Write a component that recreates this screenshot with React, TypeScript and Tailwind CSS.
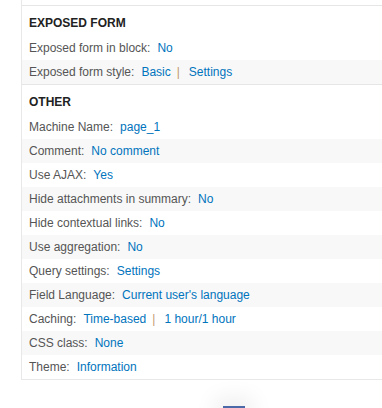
import React from "react";

type Row = { label: string; links: string[] };

const exposed: Row[] = [
  { label: "Exposed form in block:", links: ["No"] },
  { label: "Exposed form style:", links: ["Basic", "Settings"] },
];

const other: Row[] = [
  { label: "Machine Name:", links: ["page_1"] },
  { label: "Comment:", links: ["No comment"] },
  { label: "Use AJAX:", links: ["Yes"] },
  { label: "Hide attachments in summary:", links: ["No"] },
  { label: "Hide contextual links:", links: ["No"] },
  { label: "Use aggregation:", links: ["No"] },
  { label: "Query settings:", links: ["Settings"] },
  { label: "Field Language:", links: ["Current user's language"] },
  { label: "Caching:", links: ["Time-based", "1 hour/1 hour"] },
  { label: "CSS class:", links: ["None"] },
  { label: "Theme:", links: ["Information"] },
];

function RowView({ row, odd }: { row: Row; odd: boolean }) {
  return (
    <div
      className={
        "h-[24px] pl-[7px] pt-[4px] leading-4 whitespace-nowrap text-[#555555] " +
        (odd ? "bg-[#f8f8f8]" : "bg-white")
      }
    >
      <span>{row.label}</span>
      <span className="ml-[7px] text-[#0074bd]">{row.links[0]}</span>
      {row.links.length > 1 && (
        <>
          <span className="ml-[6px] text-[#c49a70]">|</span>
          <span className="ml-[9px] text-[#0074bd]">{row.links[1]}</span>
        </>
      )}
    </div>
  );
}

function Section({ title, rows }: { title: string; rows: Row[] }) {
  return (
    <div className="border-t border-[#e6e6e6]">
      <div className="h-[30px] pl-[7px] pt-[9px] leading-4 font-bold text-[#222222]">
        {title}
      </div>
      {rows.map((r, i) => (
        <RowView key={r.label} row={r} odd={i % 2 === 1} />
      ))}
    </div>
  );
}

export default function App() {
  return (
    <div
      className="w-[382px] h-[408px] overflow-hidden bg-white text-[12px] relative"
      style={{ fontFamily: '"Liberation Sans", Arial, sans-serif' }}
    >
      <div className="ml-[21px] border-l border-b border-[#e8e8e8]">
        <div className="h-[5px]" />
        <Section title="EXPOSED FORM" rows={exposed} />
        <Section title="OTHER" rows={other} />
      </div>
      <div className="flex justify-center pt-[26px]">
        <div className="ml-[86px] w-[22px] h-[10px] bg-[#4a69a6] shadow-[0_0_22px_8px_rgba(0,0,0,0.07)]" />
      </div>
    </div>
  );
}
